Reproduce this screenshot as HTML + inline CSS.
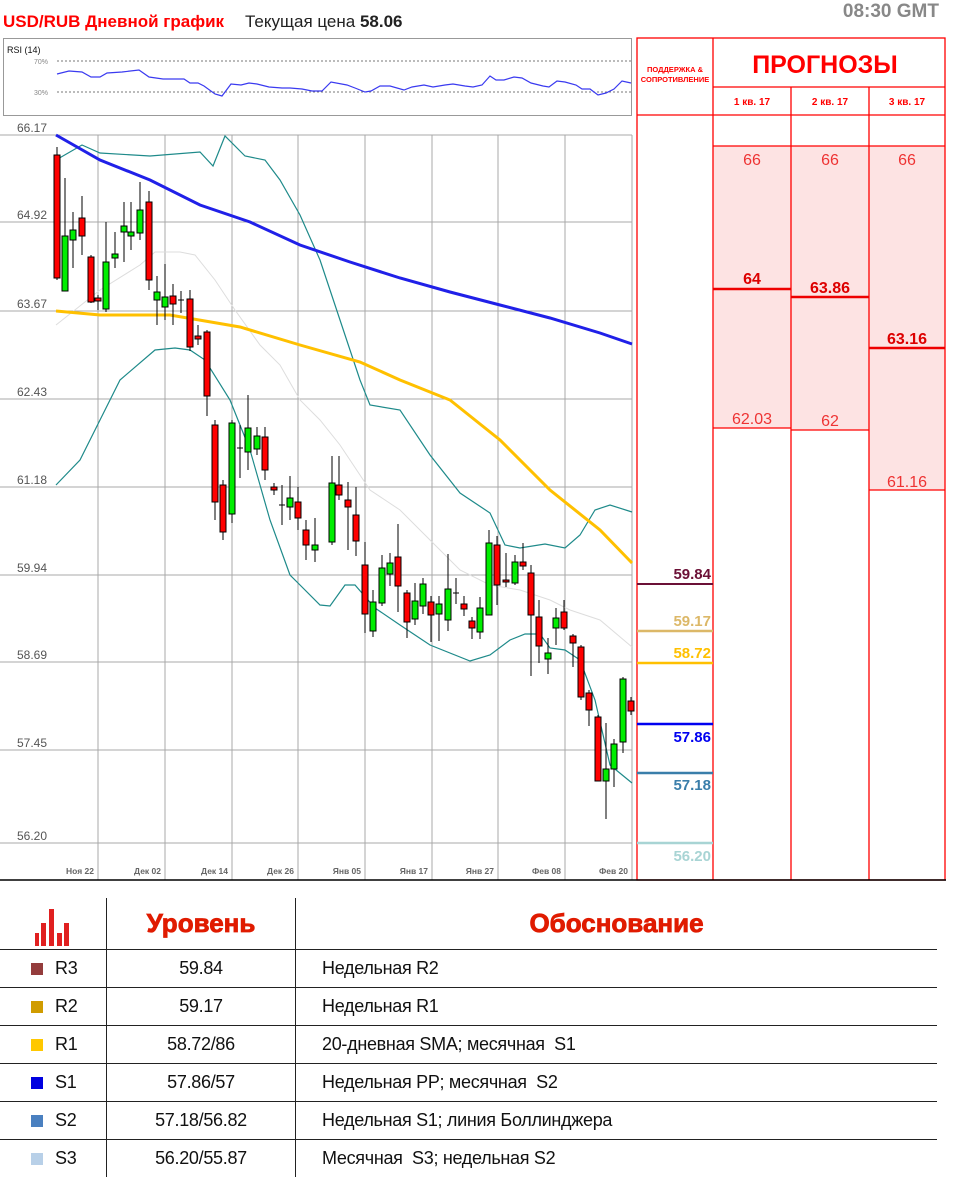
<!DOCTYPE html>
<html><head><meta charset="utf-8"><style>
body{margin:0;width:970px;height:1191px;background:#fff;font-family:"Liberation Sans",sans-serif;position:relative;overflow:hidden}
svg{position:absolute;left:0;top:0}
.t{position:absolute;font-family:"Liberation Sans",sans-serif}
table{position:absolute;left:0;top:898px;border-collapse:collapse;width:937px}
td{height:37px;font-size:18px;color:#111;padding:0;border-top:1.5px solid #222;letter-spacing:-0.3px}
td.c1{width:106px;border-right:1px solid #222}
td.c2{width:188px;text-align:center;border-right:1px solid #222}
td.c3{padding-left:26px}
tr.h td{height:51px;border-top:none}
.sq{display:inline-block;width:12px;height:12px;margin:0 12px 0 31px;vertical-align:-1px}
.hd{color:#e01b00;font-weight:bold;font-size:26px;-webkit-text-stroke:0.8px #e01b00;letter-spacing:0}
</style></head><body>
<div class="t" style="left:3px;top:12px;font-size:17px;font-weight:bold;color:#f00">USD/RUB Дневной график</div>
<div class="t" style="left:245px;top:12px;font-size:17px;color:#222">Текущая цена <b>58.06</b></div>
<div class="t" style="right:31px;top:1px;font-size:19px;font-weight:bold;color:#888">08:30 GMT</div>
<svg width="970" height="885" viewBox="0 0 970 885">
<rect x="3.5" y="38.5" width="628" height="77" fill="none" stroke="#999"/>
<text x="7" y="53" font-size="9" fill="#111" font-family="Liberation Sans">RSI (14)</text>
<text x="34" y="64" font-size="7" fill="#888" font-family="Liberation Sans">70%</text>
<text x="34" y="95" font-size="7" fill="#888" font-family="Liberation Sans">30%</text>
<line x1="57" y1="61" x2="631" y2="61" stroke="#777" stroke-dasharray="2,2"/>
<line x1="57" y1="92" x2="631" y2="92" stroke="#777" stroke-dasharray="2,2"/>
<polyline fill="none" stroke="#3a3af0" stroke-width="1.2" points="57,74 69,71 82,72 91,77 100,77 107,73 122,72 139,70 149,77 163,79 184,79 190,83 198,83 204,86 215,94 222,96 231,84 241,85 249,83 257,84 269,87 282,88 290,88 302,89 312,91 322,91 331,82 347,85 355,88 365,92 371,91 380,86 390,86 404,90 412,87 424,85 433,87 445,85 453,84 465,86 473,87 482,85 490,76 496,80 504,80 514,77 522,78 531,83 543,86 549,87 557,81 565,82 576,85 582,89 590,89 598,95 606,93 614,89 622,81 631,83"/>
<g stroke="#a8a8a8" stroke-width="1">
<line x1="0" y1="135" x2="632" y2="135"/><line x1="0" y1="222" x2="632" y2="222"/><line x1="0" y1="311" x2="632" y2="311"/><line x1="0" y1="399" x2="632" y2="399"/><line x1="0" y1="487" x2="632" y2="487"/><line x1="0" y1="575" x2="632" y2="575"/><line x1="0" y1="662" x2="632" y2="662"/><line x1="0" y1="750" x2="632" y2="750"/><line x1="0" y1="843" x2="632" y2="843"/>
<line x1="98" y1="135" x2="98" y2="880"/><line x1="165" y1="135" x2="165" y2="880"/><line x1="232" y1="135" x2="232" y2="880"/><line x1="298" y1="135" x2="298" y2="880"/><line x1="365" y1="135" x2="365" y2="880"/><line x1="432" y1="135" x2="432" y2="880"/><line x1="498" y1="135" x2="498" y2="880"/><line x1="565" y1="135" x2="565" y2="880"/><line x1="632" y1="135" x2="632" y2="880"/>
</g>
<g font-size="12" fill="#555" font-family="Liberation Sans">
<text x="17" y="132">66.17</text><text x="17" y="219">64.92</text><text x="17" y="308">63.67</text><text x="17" y="396">62.43</text><text x="17" y="484">61.18</text><text x="17" y="572">59.94</text><text x="17" y="659">58.69</text><text x="17" y="747">57.45</text><text x="17" y="840">56.20</text>
</g>
<g font-size="8.5" fill="#666" font-weight="bold" font-family="Liberation Sans" text-anchor="end">
<text x="94" y="874">Ноя 22</text><text x="161" y="874">Дек 02</text><text x="228" y="874">Дек 14</text><text x="294" y="874">Дек 26</text><text x="361" y="874">Янв 05</text><text x="428" y="874">Янв 17</text><text x="494" y="874">Янв 27</text><text x="561" y="874">Фев 08</text><text x="628" y="874">Фев 20</text>
</g>
<polyline fill="none" stroke="#ddd" stroke-width="1" points="56,325 100,290 140,265 155,252 180,252 195,255 215,280 235,310 260,345 280,365 300,400 320,420 340,445 370,490 400,510 430,540 460,570 490,585 520,590 550,600 570,610 600,620 632,647"/>
<polyline fill="none" stroke="#1e8a8a" stroke-width="1.2" points="56,160 82,145 100,153 150,156 200,152 213,166 225,136 245,156 265,160 280,180 300,215 320,260 340,320 360,380 370,405 400,410 430,455 460,493 490,513 505,545 520,548 545,544 565,548 580,535 595,510 610,505 632,512"/>
<polyline fill="none" stroke="#1e8a8a" stroke-width="1.2" points="56,485 80,460 100,420 120,380 155,350 175,348 190,350 205,360 230,400 250,450 270,520 290,575 300,585 320,605 330,606 345,585 355,585 375,608 400,625 430,645 470,661 490,655 510,640 525,634 540,634 550,648 565,650 580,660 595,700 610,765 632,783"/>
<polyline fill="none" stroke="#ffc000" stroke-width="3" points="56,311 100,315 170,315 240,327 300,345 360,362 400,380 450,400 500,440 550,490 600,530 632,563"/>
<polyline fill="none" stroke="#2020e8" stroke-width="3" points="56,135 100,160 150,180 200,205 250,222 300,245 350,262 400,278 450,292 500,305 550,318 600,333 632,344"/>
<g stroke="#000" stroke-width="1">
<line x1="57" y1="147" x2="57" y2="280"/><rect x="54" y="155" width="6" height="123" fill="#f00"/>
<line x1="65" y1="178" x2="65" y2="291"/><rect x="62" y="236" width="6" height="55" fill="#0e0"/>
<line x1="73" y1="212" x2="73" y2="268"/><rect x="70" y="230" width="6" height="10" fill="#0e0"/>
<line x1="82" y1="196" x2="82" y2="255"/><rect x="79" y="218" width="6" height="18" fill="#f00"/>
<line x1="91" y1="255" x2="91" y2="303"/><rect x="88" y="257" width="6" height="45" fill="#f00"/>
<line x1="98" y1="295" x2="98" y2="310"/><rect x="95" y="298" width="6" height="3" fill="#f00"/>
<line x1="106" y1="222" x2="106" y2="312"/><rect x="103" y="262" width="6" height="47" fill="#0e0"/>
<line x1="115" y1="232" x2="115" y2="268"/><rect x="112" y="254" width="6" height="4" fill="#0e0"/>
<line x1="124" y1="202" x2="124" y2="262"/><rect x="121" y="226" width="6" height="6" fill="#0e0"/>
<line x1="131" y1="202" x2="131" y2="250"/><rect x="128" y="232" width="6" height="4" fill="#0e0"/>
<line x1="140" y1="182" x2="140" y2="240"/><rect x="137" y="210" width="6" height="23" fill="#0e0"/>
<line x1="149" y1="191" x2="149" y2="290"/><rect x="146" y="202" width="6" height="78" fill="#f00"/>
<line x1="157" y1="276" x2="157" y2="325"/><rect x="154" y="292" width="6" height="8" fill="#0e0"/>
<line x1="165" y1="264" x2="165" y2="320"/><rect x="162" y="297" width="6" height="10" fill="#0e0"/>
<line x1="173" y1="284" x2="173" y2="325"/><rect x="170" y="296" width="6" height="8" fill="#f00"/>
<line x1="181" y1="291" x2="181" y2="313"/><line x1="178" y1="300" x2="184" y2="300"/>
<line x1="190" y1="290" x2="190" y2="351"/><rect x="187" y="299" width="6" height="48" fill="#f00"/>
<line x1="198" y1="325" x2="198" y2="345"/><rect x="195" y="336" width="6" height="3" fill="#f00"/>
<line x1="207" y1="330" x2="207" y2="416"/><rect x="204" y="332" width="6" height="64" fill="#f00"/>
<line x1="215" y1="420" x2="215" y2="520"/><rect x="212" y="425" width="6" height="77" fill="#f00"/>
<line x1="223" y1="480" x2="223" y2="540"/><rect x="220" y="485" width="6" height="47" fill="#f00"/>
<line x1="232" y1="420" x2="232" y2="523"/><rect x="229" y="423" width="6" height="91" fill="#0e0"/>
<line x1="240" y1="425" x2="240" y2="478"/><line x1="237" y1="448" x2="243" y2="448"/>
<line x1="248" y1="395" x2="248" y2="470"/><rect x="245" y="428" width="6" height="24" fill="#0e0"/>
<line x1="257" y1="427" x2="257" y2="455"/><rect x="254" y="436" width="6" height="13" fill="#0e0"/>
<line x1="265" y1="427" x2="265" y2="480"/><rect x="262" y="437" width="6" height="33" fill="#f00"/>
<line x1="274" y1="483" x2="274" y2="495"/><rect x="271" y="487" width="6" height="3" fill="#f00"/>
<line x1="282" y1="485" x2="282" y2="525"/><line x1="279" y1="505" x2="285" y2="505"/>
<line x1="290" y1="476" x2="290" y2="520"/><rect x="287" y="498" width="6" height="9" fill="#0e0"/>
<line x1="298" y1="487" x2="298" y2="530"/><rect x="295" y="502" width="6" height="16" fill="#f00"/>
<line x1="306" y1="520" x2="306" y2="560"/><rect x="303" y="530" width="6" height="15" fill="#f00"/>
<line x1="315" y1="518" x2="315" y2="562"/><rect x="312" y="545" width="6" height="5" fill="#0e0"/>
<line x1="332" y1="456" x2="332" y2="545"/><rect x="329" y="483" width="6" height="59" fill="#0e0"/>
<line x1="339" y1="456" x2="339" y2="500"/><rect x="336" y="485" width="6" height="10" fill="#f00"/>
<line x1="348" y1="482" x2="348" y2="550"/><rect x="345" y="500" width="6" height="7" fill="#f00"/>
<line x1="356" y1="487" x2="356" y2="556"/><rect x="353" y="515" width="6" height="26" fill="#f00"/>
<line x1="365" y1="542" x2="365" y2="633"/><rect x="362" y="565" width="6" height="49" fill="#f00"/>
<line x1="373" y1="590" x2="373" y2="637"/><rect x="370" y="602" width="6" height="29" fill="#0e0"/>
<line x1="382" y1="555" x2="382" y2="606"/><rect x="379" y="568" width="6" height="35" fill="#0e0"/>
<line x1="390" y1="553" x2="390" y2="586"/><rect x="387" y="563" width="6" height="11" fill="#0e0"/>
<line x1="398" y1="524" x2="398" y2="612"/><rect x="395" y="557" width="6" height="29" fill="#f00"/>
<line x1="407" y1="590" x2="407" y2="638"/><rect x="404" y="593" width="6" height="29" fill="#f00"/>
<line x1="415" y1="583" x2="415" y2="625"/><rect x="412" y="601" width="6" height="18" fill="#0e0"/>
<line x1="423" y1="578" x2="423" y2="614"/><rect x="420" y="584" width="6" height="22" fill="#0e0"/>
<line x1="431" y1="596" x2="431" y2="642"/><rect x="428" y="602" width="6" height="13" fill="#f00"/>
<line x1="439" y1="596" x2="439" y2="641"/><rect x="436" y="604" width="6" height="10" fill="#0e0"/>
<line x1="448" y1="554" x2="448" y2="631"/><rect x="445" y="589" width="6" height="31" fill="#0e0"/>
<line x1="456" y1="578" x2="456" y2="604"/><line x1="453" y1="593" x2="459" y2="593"/>
<line x1="464" y1="596" x2="464" y2="616"/><rect x="461" y="604" width="6" height="5" fill="#f00"/>
<line x1="472" y1="617" x2="472" y2="639"/><rect x="469" y="621" width="6" height="7" fill="#f00"/>
<line x1="480" y1="597" x2="480" y2="639"/><rect x="477" y="608" width="6" height="24" fill="#0e0"/>
<line x1="489" y1="530" x2="489" y2="615"/><rect x="486" y="543" width="6" height="72" fill="#0e0"/>
<line x1="497" y1="536" x2="497" y2="605"/><rect x="494" y="545" width="6" height="40" fill="#f00"/>
<line x1="506" y1="553" x2="506" y2="587"/><rect x="503" y="580" width="6" height="2" fill="#f00"/>
<line x1="515" y1="555" x2="515" y2="585"/><rect x="512" y="562" width="6" height="21" fill="#0e0"/>
<line x1="523" y1="543" x2="523" y2="570"/><rect x="520" y="562" width="6" height="4" fill="#f00"/>
<line x1="531" y1="565" x2="531" y2="676"/><rect x="528" y="573" width="6" height="42" fill="#f00"/>
<line x1="539" y1="600" x2="539" y2="663"/><rect x="536" y="617" width="6" height="29" fill="#f00"/>
<line x1="548" y1="638" x2="548" y2="674"/><rect x="545" y="653" width="6" height="6" fill="#0e0"/>
<line x1="556" y1="608" x2="556" y2="645"/><rect x="553" y="618" width="6" height="10" fill="#0e0"/>
<line x1="564" y1="600" x2="564" y2="630"/><rect x="561" y="612" width="6" height="16" fill="#f00"/>
<line x1="573" y1="634" x2="573" y2="667"/><rect x="570" y="636" width="6" height="7" fill="#f00"/>
<line x1="581" y1="645" x2="581" y2="700"/><rect x="578" y="647" width="6" height="50" fill="#f00"/>
<line x1="589" y1="690" x2="589" y2="726"/><rect x="586" y="693" width="6" height="17" fill="#f00"/>
<line x1="598" y1="715" x2="598" y2="781"/><rect x="595" y="717" width="6" height="64" fill="#f00"/>
<line x1="606" y1="723" x2="606" y2="819"/><rect x="603" y="769" width="6" height="12" fill="#0e0"/>
<line x1="614" y1="739" x2="614" y2="787"/><rect x="611" y="744" width="6" height="25" fill="#0e0"/>
<line x1="623" y1="677" x2="623" y2="753"/><rect x="620" y="679" width="6" height="63" fill="#0e0"/>
<line x1="631" y1="697" x2="631" y2="715"/><rect x="628" y="701" width="6" height="10" fill="#f00"/>
</g>
<rect x="713" y="146" width="78" height="282" fill="#fde3e3"/>
<rect x="791" y="146" width="78" height="284" fill="#fde3e3"/>
<rect x="869" y="146" width="76" height="344" fill="#fde3e3"/>
<g stroke="#f00" stroke-width="1.3" fill="none">
<rect x="637" y="38" width="308" height="842"/>
<line x1="713" y1="38" x2="713" y2="880"/>
<line x1="791" y1="87" x2="791" y2="880"/>
<line x1="869" y1="87" x2="869" y2="880"/>
<line x1="713" y1="87" x2="945" y2="87"/>
<line x1="637" y1="115" x2="945" y2="115"/>
<line x1="713" y1="146" x2="945" y2="146"/>
<line x1="713" y1="428" x2="791" y2="428"/>
<line x1="791" y1="430" x2="869" y2="430"/>
<line x1="869" y1="490" x2="945" y2="490"/>
</g>
<g stroke="#e00" stroke-width="2.5">
<line x1="713" y1="289" x2="791" y2="289"/><line x1="791" y1="297" x2="869" y2="297"/><line x1="869" y1="348" x2="945" y2="348"/>
</g>
<g font-family="Liberation Sans" fill="#f00" text-anchor="middle">
<text x="675" y="72" font-size="7.5" font-weight="bold">ПОДДЕРЖКА &amp;</text>
<text x="675" y="82" font-size="7.5" font-weight="bold">СОПРОТИВЛЕНИЕ</text>
<text x="825" y="73" font-size="25" font-weight="bold">ПРОГНОЗЫ</text>
<text x="752" y="105" font-size="10" font-weight="bold">1 кв. 17</text>
<text x="830" y="105" font-size="10" font-weight="bold">2 кв. 17</text>
<text x="907" y="105" font-size="10" font-weight="bold">3 кв. 17</text>
<g font-size="16" fill="#e33"><text x="752" y="165">66</text><text x="830" y="165">66</text><text x="907" y="165">66</text>
<text x="752" y="424">62.03</text><text x="830" y="426">62</text><text x="907" y="487">61.16</text></g>
<g font-size="16" font-weight="bold" fill="#d00"><text x="752" y="284">64</text><text x="830" y="293">63.86</text><text x="907" y="344">63.16</text></g>
</g>
<line x1="637" y1="584" x2="713" y2="584" stroke="#6b1036" stroke-width="2"/>
<line x1="637" y1="631" x2="713" y2="631" stroke="#dcb868" stroke-width="2.5"/>
<line x1="637" y1="663" x2="713" y2="663" stroke="#ffc000" stroke-width="2.5"/>
<line x1="637" y1="724" x2="713" y2="724" stroke="#0000f0" stroke-width="2.5"/>
<line x1="637" y1="773" x2="713" y2="773" stroke="#3a7eaa" stroke-width="2.5"/>
<line x1="637" y1="843" x2="713" y2="843" stroke="#a8d4d4" stroke-width="2.5"/>
<g font-family="Liberation Sans" font-size="15" font-weight="bold" text-anchor="end">
<text x="711" y="579" fill="#6b1036">59.84</text>
<text x="711" y="626" fill="#dcb868">59.17</text>
<text x="711" y="658" fill="#ffc000">58.72</text>
<text x="711" y="742" fill="#0000f0">57.86</text>
<text x="711" y="790" fill="#3a7eaa">57.18</text>
<text x="711" y="861" fill="#a8d4d4">56.20</text>
</g>
<line x1="0" y1="880" x2="946" y2="880" stroke="#000" stroke-width="1.5"/>
</svg>
<svg width="80" height="60" style="left:0;top:898px">
<g fill="#e02020"><rect x="35" y="35" width="4" height="13"/><rect x="41" y="25" width="5" height="23"/><rect x="49" y="11" width="5" height="37"/><rect x="57" y="35" width="5" height="13"/><rect x="64" y="25" width="5" height="23"/></g>
</svg>
<table>
<tr class="h"><td class="c1"></td><td class="c2 hd">Уровень</td><td class="hd" style="text-align:center;padding-left:0">Обоснование</td></tr>
<tr><td class="c1"><span class="sq" style="background:#943c3c"></span>R3</td><td class="c2">59.84</td><td class="c3">Недельная R2</td></tr>
<tr><td class="c1"><span class="sq" style="background:#d09c00"></span>R2</td><td class="c2">59.17</td><td class="c3">Недельная R1</td></tr>
<tr><td class="c1"><span class="sq" style="background:#ffc800"></span>R1</td><td class="c2">58.72/86</td><td class="c3">20-дневная SMA; месячная&nbsp; S1</td></tr>
<tr><td class="c1"><span class="sq" style="background:#0000e0"></span>S1</td><td class="c2">57.86/57</td><td class="c3">Недельная PP; месячная&nbsp; S2</td></tr>
<tr><td class="c1"><span class="sq" style="background:#4a80c0"></span>S2</td><td class="c2">57.18/56.82</td><td class="c3">Недельная S1; линия Боллинджера</td></tr>
<tr><td class="c1"><span class="sq" style="background:#b8d0e8"></span>S3</td><td class="c2">56.20/55.87</td><td class="c3">Месячная&nbsp; S3; недельная S2</td></tr>
</table>
</body></html>
